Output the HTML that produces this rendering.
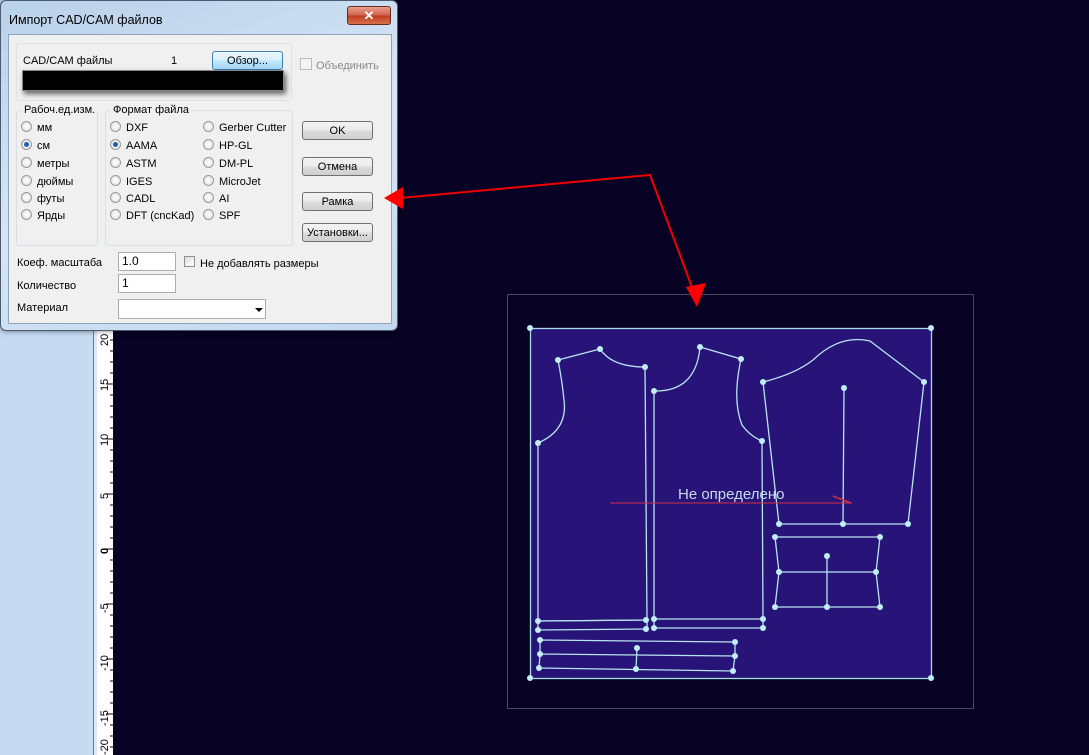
<!DOCTYPE html>
<html><head><meta charset="utf-8"><style>
body{margin:0;width:1089px;height:755px;overflow:hidden;background:#080224;position:relative;font-family:"Liberation Sans",sans-serif;font-size:11px;color:#000}
.a{position:absolute}
.btn{position:absolute;left:302px;width:71px;height:19px;border:1px solid #707070;border-radius:3px;background:linear-gradient(#f2f2f2 0%,#ebebeb 50%,#dddddd 51%,#cfcfcf 100%);text-align:center;line-height:19px;box-sizing:border-box}
.rad{position:absolute;width:11px;height:11px;border-radius:50%;border:1px solid #9a9a9a;background:radial-gradient(#fff,#dcdcdc);box-sizing:border-box}
.rad.on::after{content:"";position:absolute;left:2px;top:2px;width:5px;height:5px;border-radius:50%;background:#1c62b0}
.gb{position:absolute;border:1px solid #d5dfe5;border-radius:3px}
.gl{position:absolute;background:#f0f0f0;padding:0 2px}
.inp{position:absolute;background:#fff;border:1px solid #abadb3;box-sizing:border-box;padding-left:3px;line-height:17px;font-size:12px}
.t{position:absolute;margin-top:2px}
</style></head><body>
<svg class="a" style="left:0;top:0" width="1089" height="755">
<rect x="0" y="0" width="93" height="755" fill="#c6daf2"/>
<line x1="93.5" y1="0" x2="93.5" y2="755" stroke="#6d7c8e"/>
<rect x="94" y="0" width="3" height="755" fill="#dce8f6"/>
<rect x="97" y="0" width="16" height="755" fill="#ffffff"/>
<g stroke="#000" stroke-width="1">
<path d="M113 329h-4M113 340h-3M113 351h-3M113 362h-3M113 373h-3M113 384h-7M113 395h-3M113 406h-3M113 417h-3M113 428h-3M113 439h-7M113 450h-3M113 461h-3M113 472h-3M113 483h-3M113 494h-7M113 505h-3M113 516h-3M113 527h-3M113 538h-3M113 549h-7M113 560h-3M113 571h-3M113 582h-3M113 593h-3M113 604h-7M113 615h-3M113 626h-3M113 637h-3M113 648h-3M113 659h-7M113 670h-3M113 681h-3M113 692h-3M113 703h-3M113 714h-7M113 725h-3M113 736h-3M113 747h-3"/>
</g>
<g font-family="Liberation Sans" font-size="11" fill="#000">
<text transform="translate(108,391) rotate(-90)">15</text>
<text transform="translate(108,446) rotate(-90)">10</text>
<text transform="translate(108,499) rotate(-90)">5</text>
<text transform="translate(108,554) rotate(-90)" font-weight="bold">0</text>
<text transform="translate(108,613) rotate(-90)">-5</text>
<text transform="translate(108,671) rotate(-90)">-10</text>
<text transform="translate(108,726) rotate(-90)">-15</text>
<text transform="translate(108,755) rotate(-90)">-20</text>
<text transform="translate(108,346) rotate(-90)">20</text>
</g>
<rect x="507.5" y="294.5" width="466" height="414" fill="none" stroke="#4a4868"/>
<rect x="530.5" y="328.5" width="401" height="350" fill="#281478" stroke="#a6dde6" stroke-width="1.3"/>
<g fill="none" stroke="#b8e4ee" stroke-width="1.3">
<path d="M558 360 L600 349 Q612 367 645 367 L647 620 L538 621 L538 443 Q568 430 564 400 Q562 380 558 360"/>
<path d="M538 621 L646 620 M538 630 L646 629 M538 621 L538 630 M647 620 L647 629"/>
<path d="M654 391 Q696 392 700 347 L741 359 Q732 400 742 425 Q750 436 762 441 L763 619 L654 619 Z"/>
<path d="M654 628 L763 628 M654 619 L654 628 M763 619 L763 628"/>
<path d="M763 382 Q795 374 813 360 Q840 334 870 341 L924 382 L908 524 L779 524 Z"/>
<path d="M844 388 L843 524"/>
<path d="M775 537 L880 537 L876 572 L880 607 L775 607 L779 572 Z M779 572 L876 572 M827 556 L827 607"/>
<path d="M540 640 L735 642 L735 656 L733 671 L539 668 L540 654 Z M540 654 L735 656 M637 648 L636 669"/>
</g>
<g fill="#bfeef5">
<circle cx="530" cy="328" r="3"/><circle cx="931" cy="328" r="3"/><circle cx="530" cy="678" r="3"/><circle cx="931" cy="678" r="3"/>
<circle cx="558" cy="360" r="3"/><circle cx="600" cy="349" r="3"/><circle cx="645" cy="367" r="3"/><circle cx="538" cy="443" r="3"/>
<circle cx="538" cy="621" r="3"/><circle cx="646" cy="620" r="3"/><circle cx="538" cy="630" r="3"/><circle cx="646" cy="629" r="3"/>
<circle cx="654" cy="391" r="3"/><circle cx="700" cy="347" r="3"/><circle cx="741" cy="359" r="3"/><circle cx="762" cy="441" r="3"/>
<circle cx="654" cy="619" r="3"/><circle cx="763" cy="619" r="3"/><circle cx="654" cy="628" r="3"/><circle cx="763" cy="628" r="3"/>
<circle cx="763" cy="382" r="3"/><circle cx="924" cy="382" r="3"/><circle cx="844" cy="388" r="3"/><circle cx="779" cy="524" r="3"/><circle cx="843" cy="524" r="3"/><circle cx="908" cy="524" r="3"/>
<circle cx="775" cy="537" r="3"/><circle cx="880" cy="537" r="3"/><circle cx="779" cy="572" r="3"/><circle cx="876" cy="572" r="3"/><circle cx="775" cy="607" r="3"/><circle cx="880" cy="607" r="3"/><circle cx="827" cy="556" r="3"/><circle cx="827" cy="607" r="3"/>
<circle cx="540" cy="640" r="3"/><circle cx="735" cy="642" r="3"/><circle cx="540" cy="654" r="3"/><circle cx="735" cy="656" r="3"/><circle cx="539" cy="668" r="3"/><circle cx="733" cy="671" r="3"/><circle cx="637" cy="648" r="3"/><circle cx="636" cy="669" r="3"/>
</g>
<line x1="610" y1="503" x2="852" y2="503" stroke="#d0304a" stroke-width="1"/>
<line x1="833" y1="496" x2="851" y2="503" stroke="#d0304a" stroke-width="1.5"/>
<text x="678" y="499" font-family="Liberation Sans" font-size="15" fill="#c6dcea">Не определено</text>
</svg>

<!-- dialog -->
<div class="a" style="left:0;top:0;width:398px;height:331px;border-radius:6px;background:linear-gradient(160deg,#b9d1ea,#d6e5f5 50%,#c2d8ee);border:1px solid #4a5a70;box-sizing:border-box;box-shadow:0 0 6px rgba(0,0,0,.5)"></div>
<div class="a" style="left:9px;top:13px;font-size:12.5px;color:#000">Импорт CAD/CAM файлов</div>
<div class="a" style="left:347px;top:6px;width:44px;height:19px;border-radius:3px;border:1px solid #6b2a20;box-sizing:border-box;background:linear-gradient(#e8a090,#d0604a 50%,#c03a20 51%,#d8704a);color:#fff;text-align:center;font-weight:bold;font-size:13px;line-height:17px">✕</div>
<div class="a" style="left:8px;top:34px;width:384px;height:290px;background:#f0f0f0;border:1px solid #8ea4bc;box-sizing:border-box"></div>

<div class="gb" style="left:16px;top:43px;width:274px;height:56px;border-color:#e0e0e0"></div>
<div class="t" style="left:23px;top:53px">CAD/CAM файлы</div>
<div class="t" style="left:171px;top:53px">1</div>
<div class="a" style="left:212px;top:51px;width:71px;height:19px;border:1px solid #3c7fb1;border-radius:3px;box-sizing:border-box;background:linear-gradient(#eaf6fd,#d9f0fc 50%,#bee6fd 51%,#a7d9f5);text-align:center;line-height:19px">Обзор...</div>
<div class="a" style="left:22px;top:70px;width:262px;height:21px;background:#000;border:1px solid #888;box-sizing:border-box;box-shadow:2px 3px 5px rgba(0,0,0,.6)"></div>
<div class="a" style="left:300px;top:58px;width:12px;height:12px;border:1px solid #bbb;box-sizing:border-box;background:#f4f4f4"></div>
<div class="t" style="left:316px;top:58px;color:#8a8a8a">Объединить</div>

<div class="gb" style="left:16px;top:110px;width:80px;height:134px"></div>
<div class="gl" style="left:22px;top:104px">Рабоч.ед.изм.</div>
<div class="rad" style="left:21px;top:121px"></div><div class="t" style="left:37px;top:120px">мм</div>
<div class="rad on" style="left:21px;top:139px"></div><div class="t" style="left:37px;top:138px">см</div>
<div class="rad" style="left:21px;top:157px"></div><div class="t" style="left:37px;top:156px">метры</div>
<div class="rad" style="left:21px;top:175px"></div><div class="t" style="left:37px;top:174px">дюймы</div>
<div class="rad" style="left:21px;top:192px"></div><div class="t" style="left:37px;top:191px">футы</div>
<div class="rad" style="left:21px;top:209px"></div><div class="t" style="left:37px;top:208px">Ярды</div>

<div class="gb" style="left:105px;top:110px;width:186px;height:134px"></div>
<div class="gl" style="left:111px;top:104px">Формат файла</div>
<div class="rad" style="left:110px;top:121px"></div><div class="t" style="left:126px;top:120px">DXF</div>
<div class="rad on" style="left:110px;top:139px"></div><div class="t" style="left:126px;top:138px">AAMA</div>
<div class="rad" style="left:110px;top:157px"></div><div class="t" style="left:126px;top:156px">ASTM</div>
<div class="rad" style="left:110px;top:175px"></div><div class="t" style="left:126px;top:174px">IGES</div>
<div class="rad" style="left:110px;top:192px"></div><div class="t" style="left:126px;top:191px">CADL</div>
<div class="rad" style="left:110px;top:209px"></div><div class="t" style="left:126px;top:208px">DFT (cncKad)</div>
<div class="rad" style="left:203px;top:121px"></div><div class="t" style="left:219px;top:120px">Gerber Cutter</div>
<div class="rad" style="left:203px;top:139px"></div><div class="t" style="left:219px;top:138px">HP-GL</div>
<div class="rad" style="left:203px;top:157px"></div><div class="t" style="left:219px;top:156px">DM-PL</div>
<div class="rad" style="left:203px;top:175px"></div><div class="t" style="left:219px;top:174px">MicroJet</div>
<div class="rad" style="left:203px;top:192px"></div><div class="t" style="left:219px;top:191px">AI</div>
<div class="rad" style="left:203px;top:209px"></div><div class="t" style="left:219px;top:208px">SPF</div>

<div class="btn" style="top:121px">OK</div>
<div class="btn" style="top:157px">Отмена</div>
<div class="btn" style="top:192px">Рамка</div>
<div class="btn" style="top:223px">Установки...</div>

<div class="t" style="left:17px;top:255px">Коеф. масштаба</div>
<div class="inp" style="left:118px;top:252px;width:58px;height:19px">1.0</div>
<div class="a" style="left:184px;top:256px;width:11px;height:11px;border:1px solid #8e8f8f;box-sizing:border-box;background:linear-gradient(135deg,#dcdcdc,#fff)"></div>
<div class="t" style="left:200px;top:256px">Не добавлять размеры</div>
<div class="t" style="left:17px;top:278px">Количество</div>
<div class="inp" style="left:118px;top:274px;width:58px;height:19px">1</div>
<div class="t" style="left:17px;top:300px">Материал</div>
<div class="inp" style="left:118px;top:299px;width:148px;height:20px"></div>
<div class="a" style="left:255px;top:308px;width:0;height:0;border-left:4px solid transparent;border-right:4px solid transparent;border-top:4px solid #000"></div>

<svg class="a" style="left:0;top:0" width="1089" height="755">
<polyline points="400,198 650,175 693,290" fill="none" stroke="#e00" stroke-width="2"/>
<polygon points="384,198 403,187 403,209" fill="#f00"/>
<polygon points="697,307 686,287 706,283" fill="#f00"/>
</svg>
</body></html>
